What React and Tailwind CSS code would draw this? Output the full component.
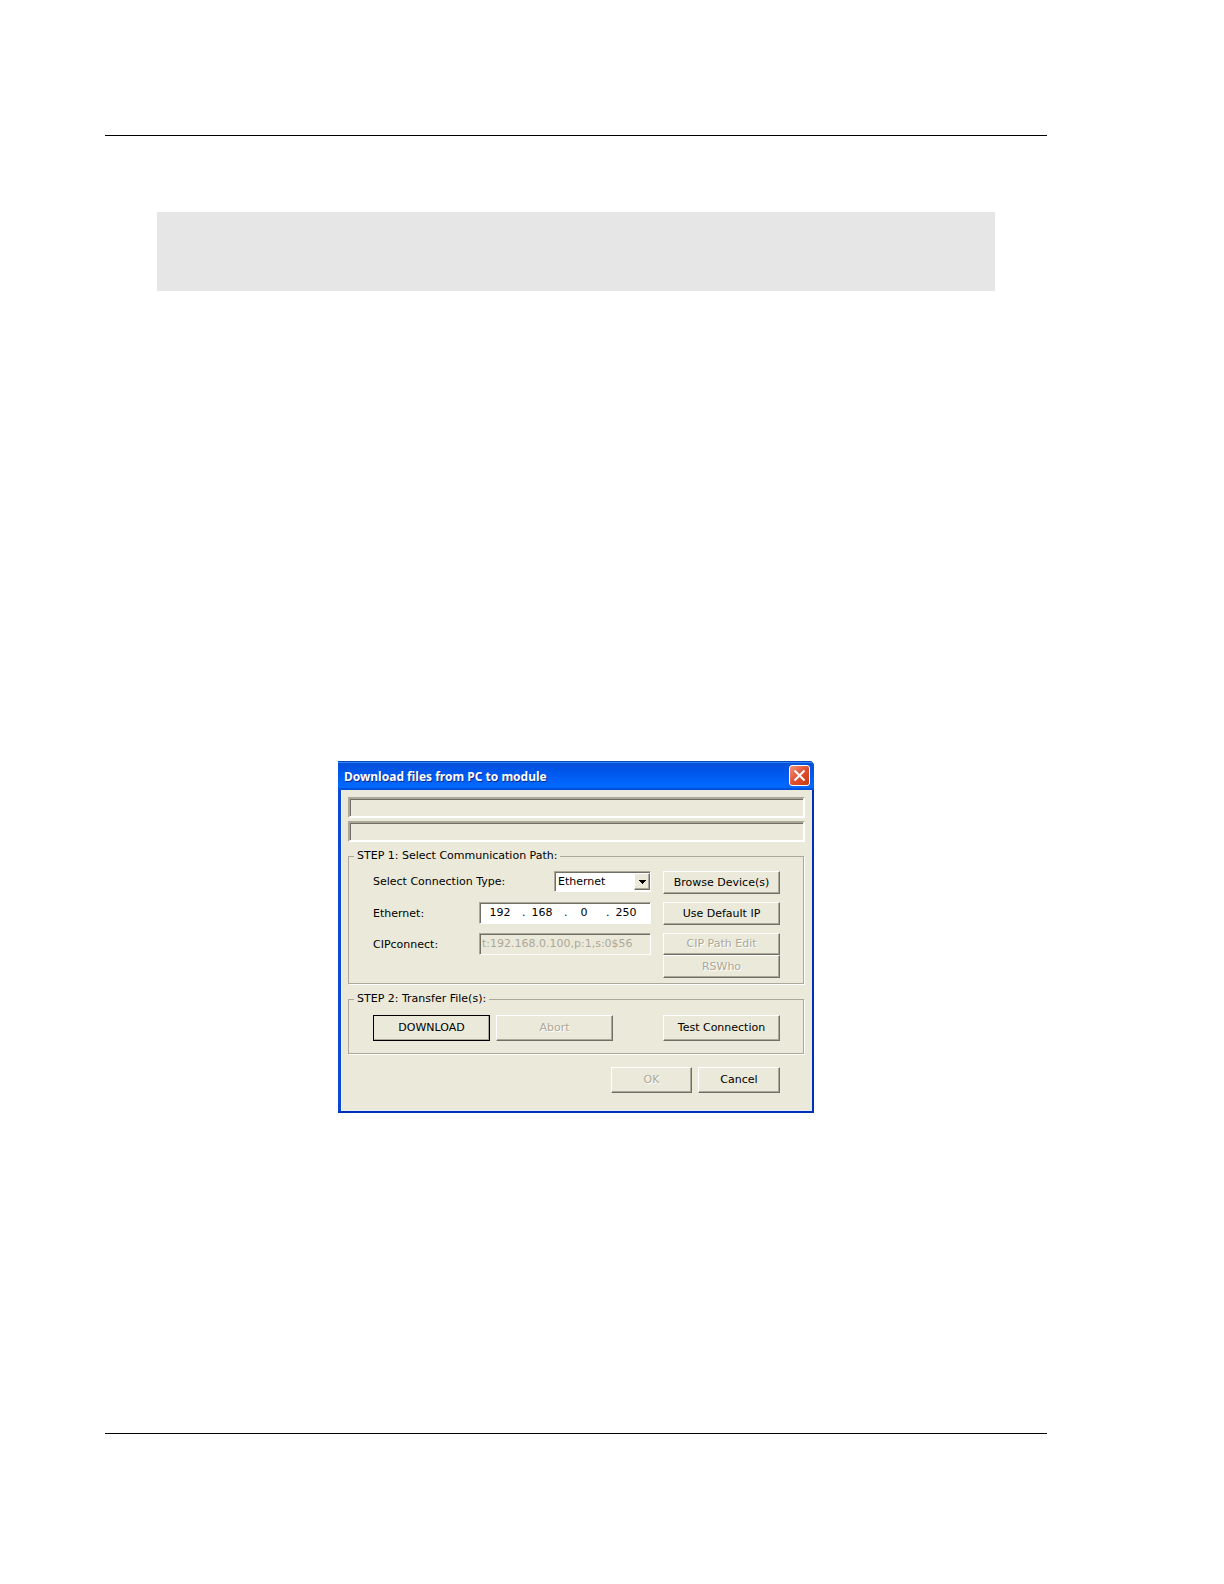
import React, { useState } from "react";
import clsx from "clsx";

const RAISED = "border border-t-white border-l-white border-r-[#716f64] border-b-[#716f64] shadow-[inset_-1px_-1px_0_#aca899]";
const SUNKEN = "border border-t-[#aca899] border-l-[#aca899] border-r-white border-b-white shadow-[inset_1px_1px_0_#716f64]";

const Button = ({ className, disabled, primary, children }) => (
  <button
    type="button"
    disabled={disabled}
    className={clsx(
      "shrink-0 bg-[#ebe9d9] text-center leading-4",
      RAISED,
      primary && "outline-1 -outline-offset-1 outline-black",
      disabled ? "text-[#aca899] [text-shadow:1px_1px_0_#fff]" : "text-black",
      className
    )}
  >
    {children}
  </button>
);

const Progress = ({ label }) => (
  <div
    role="progressbar"
    aria-label={label}
    aria-valuenow={0}
    className="h-[21px] border-2 border-t-[#aca899] border-l-[#aca899] border-r-white border-b-white shadow-[inset_1px_1px_0_#716f64]"
  />
);

const Group = ({ title, className, children }) => (
  <fieldset className={clsx("min-w-0 border border-[#aca899] pr-[23px] pl-6 shadow-[1px_1px_0_#fff]", className)}>
    <legend className="-ml-[19px] bg-[#ebe9d9] px-[3px] leading-4">{title}</legend>
    {children}
  </fieldset>
);

const DownloadDialog = () => {
  const [type, setType] = useState("Ethernet");
  const [ip, setIp] = useState(["192", "168", "0", "250"]);

  const setOctet = (index, value) => setIp(ip.map((o, i) => (i === index ? value : o)));

  return (
    <section
      role="dialog"
      aria-labelledby="dialog-title"
      className="mx-auto w-[476px] max-w-full overflow-hidden rounded-tr-[5px] bg-linear-to-r from-[#0a48d8] from-50% to-[#0030b8] to-50% font-['DejaVu_Sans',sans-serif] text-[11px] text-black"
    >
      <header className="flex h-[29px] items-center justify-between bg-linear-to-b from-[#0a50d0] from-0% via-[#0054e8] via-30% to-[#0068ff] to-85% pr-1 pl-[6px] shadow-[inset_0_1px_0_#0a48c0,inset_0_2px_0_#2e86ff,inset_0_-2px_0_#0050e0]">
        <h1 id="dialog-title" className="pt-[2px] font-['Noto_Sans',sans-serif] text-xs leading-4 font-bold text-white [text-shadow:1px_1px_0_#0a2a90]">
          Download files from PC to module
        </h1>
        <button type="button" aria-label="Close" className="size-[21px] rounded-[3px] border border-white bg-linear-to-br from-[#f09078] via-[#e05030] to-[#c83808]">
          <svg viewBox="0 0 19 19" className="size-[19px]" fill="none" stroke="#fff" strokeWidth="2">
            <path d="M4.5 4.5l10 10M14.5 4.5l-10 10" />
          </svg>
        </button>
      </header>

      <div className="mr-[2px] ml-[3px] bg-[#ebe9d9] pt-[7px] pr-2 pb-[18px] pl-[7px] shadow-[inset_1px_0_0_#f6f4ea,inset_0_-1px_0_#e4eef4]">
        <div className="-mr-px grid gap-[3px]">
          <Progress label="File progress" />
          <Progress label="Total progress" />
        </div>

        <Group title="STEP 1: Select Communication Path:" className="mt-[6px] pt-[7px] pb-[5px]">
          <div className="grid gap-2">
            <div className="flex h-[23px] items-start">
              <label htmlFor="connection-type" className="py-[3px] leading-4">Select Connection Type:</label>
              <div className={clsx("relative ml-auto h-[21px] w-[97px] bg-white", SUNKEN)}>
                <select
                  id="connection-type"
                  value={type}
                  onChange={(e) => setType(e.target.value)}
                  className="block h-full w-full appearance-none bg-transparent pl-[3px] leading-4 outline-none"
                >
                  <option>Ethernet</option>
                  <option>CIPconnect</option>
                </select>
                <span className={clsx("pointer-events-none absolute inset-y-px right-0 flex w-4 items-center justify-center bg-[#ebe9d9]", RAISED)}>
                  <svg viewBox="0 0 7 4" className="h-1 w-[7px]" shapeRendering="crispEdges">
                    <path d="M0 0h7v1h-1v1h-1v1h-1v1h-1v-1h-1v-1h-1v-1h-1z" />
                  </svg>
                </span>
              </div>
              <Button className="ml-3 h-[23px] w-[117px]">Browse Device(s)</Button>
            </div>

            <div className="flex h-[23px] items-start" role="group" aria-labelledby="ip-label">
              <span id="ip-label" className="py-1 leading-4">Ethernet:</span>
              <div className={clsx("ml-auto flex h-[22px] w-[172px] items-center bg-white pl-[3px]", SUNKEN)}>
                {ip.map((octet, i) => (
                  <React.Fragment key={i}>
                    {i > 0 && <span className="w-[3px] leading-4">.</span>}
                    <input
                      type="text"
                      aria-label={`Octet ${i + 1}`}
                      value={octet}
                      onChange={(e) => setOctet(i, e.target.value)}
                      className="w-[39px] pr-[5px] text-center leading-4 outline-none"
                    />
                  </React.Fragment>
                ))}
              </div>
              <Button className="ml-3 h-[23px] w-[117px]">Use Default IP</Button>
            </div>

            <div className="flex items-start">
              <label htmlFor="cip-path" className="py-1 leading-4">CIPconnect:</label>
              <input
                id="cip-path"
                type="text"
                disabled
                defaultValue="t:192.168.0.100,p:1,s:0$56"
                className={clsx("ml-auto h-[22px] w-[172px] pb-[2px] pl-[2px] leading-4 text-[#aca899]", SUNKEN)}
              />
              <div className="ml-3 flex flex-col">
                <Button disabled className="h-[22px] w-[117px]">CIP Path Edit</Button>
                <Button disabled className="h-[23px] w-[117px]">RSWho</Button>
              </div>
            </div>
          </div>
        </Group>

        <Group title="STEP 2: Transfer File(s):" className="mt-[7px] pt-2 pb-3">
          <div className="flex gap-[6px]">
            <Button primary className="h-[26px] w-[117px]">DOWNLOAD</Button>
            <Button disabled className="h-[26px] w-[117px]">Abort</Button>
            <Button className="ml-auto h-[26px] w-[117px]">Test Connection</Button>
          </div>
        </Group>

        <div className="mt-[13px] flex justify-end gap-[6px] pr-6">
          <Button disabled className="h-[26px] w-[81px]">OK</Button>
          <Button className="h-[26px] w-[82px]">Cancel</Button>
        </div>
      </div>
      <div className="h-[2px] bg-[#0030b8]" />
    </section>
  );
};

const App = () => (
  <main className="min-h-screen bg-white pt-[135px] pr-[177px] pb-[150px] pl-[105px]">
    <hr className="border-t border-black" />
    <div className="mx-[52px] mt-[76px] mb-[470px] h-[79px] bg-[#e6e6e6]" />
    <DownloadDialog />
    <hr className="mt-[320px] border-t border-black" />
  </main>
);

export default App;
